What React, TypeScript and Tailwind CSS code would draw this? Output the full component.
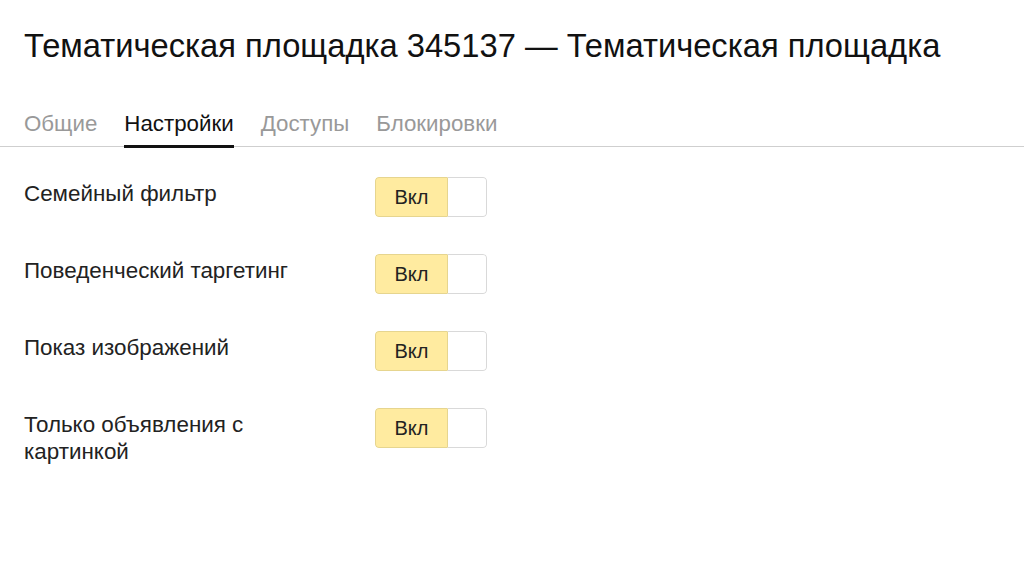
const tabs = ["Общие", "Настройки", "Доступы", "Блокировки"];

const settings = [
  "Семейный фильтр",
  "Поведенческий таргетинг",
  "Показ изображений",
  "Только объявления с картинкой",
];

function Toggle() {
  return (
    <div className="flex h-[40px] w-[112px] rounded-[4px] overflow-hidden">
      <div className="flex w-[72px] items-center justify-center rounded-l-[4px] border border-r-0 border-[#e6d58f] bg-[#ffeba0] text-[20px] text-[#222]">
        Вкл
      </div>
      <div className="w-[40px] rounded-r-[4px] border border-l-[#e6d58f] border-[#d9d9d9] bg-white" />
    </div>
  );
}

export default function App() {
  return (
    <div className="min-h-screen bg-white font-['Liberation_Sans',Arial,sans-serif] text-[#111]">
      <h1 className="px-6 pt-[26px] text-[32.7px] leading-[40px] text-[#111]">
        Тематическая площадка 345137 — Тематическая площадка
      </h1>

      {/* tabs */}
      <div className="mt-[44px] flex gap-[27px] border-b border-[#cfcfcf] px-6">
        {tabs.map((t) =>
          t === "Настройки" ? (
            <div
              key={t}
              className="-mb-[2px] border-b-[3px] border-[#111] pb-[6px] text-[22.3px] leading-[28px] text-[#111]"
            >
              {t}
            </div>
          ) : (
            <div key={t} className="pb-[8px] text-[22.3px] leading-[28px] text-[#999]">
              {t}
            </div>
          )
        )}
      </div>

      {/* settings */}
      <div className="flex flex-col gap-[37px] px-6 pt-[30px]">
        {settings.map((s) => (
          <div key={s} className="flex items-start">
            <div className="w-[290px] pt-[3px] text-[22.4px] leading-[27px] text-[#222]">{s}</div>
            <div className="ml-[61px]">
              <Toggle />
            </div>
          </div>
        ))}
      </div>
    </div>
  );
}
